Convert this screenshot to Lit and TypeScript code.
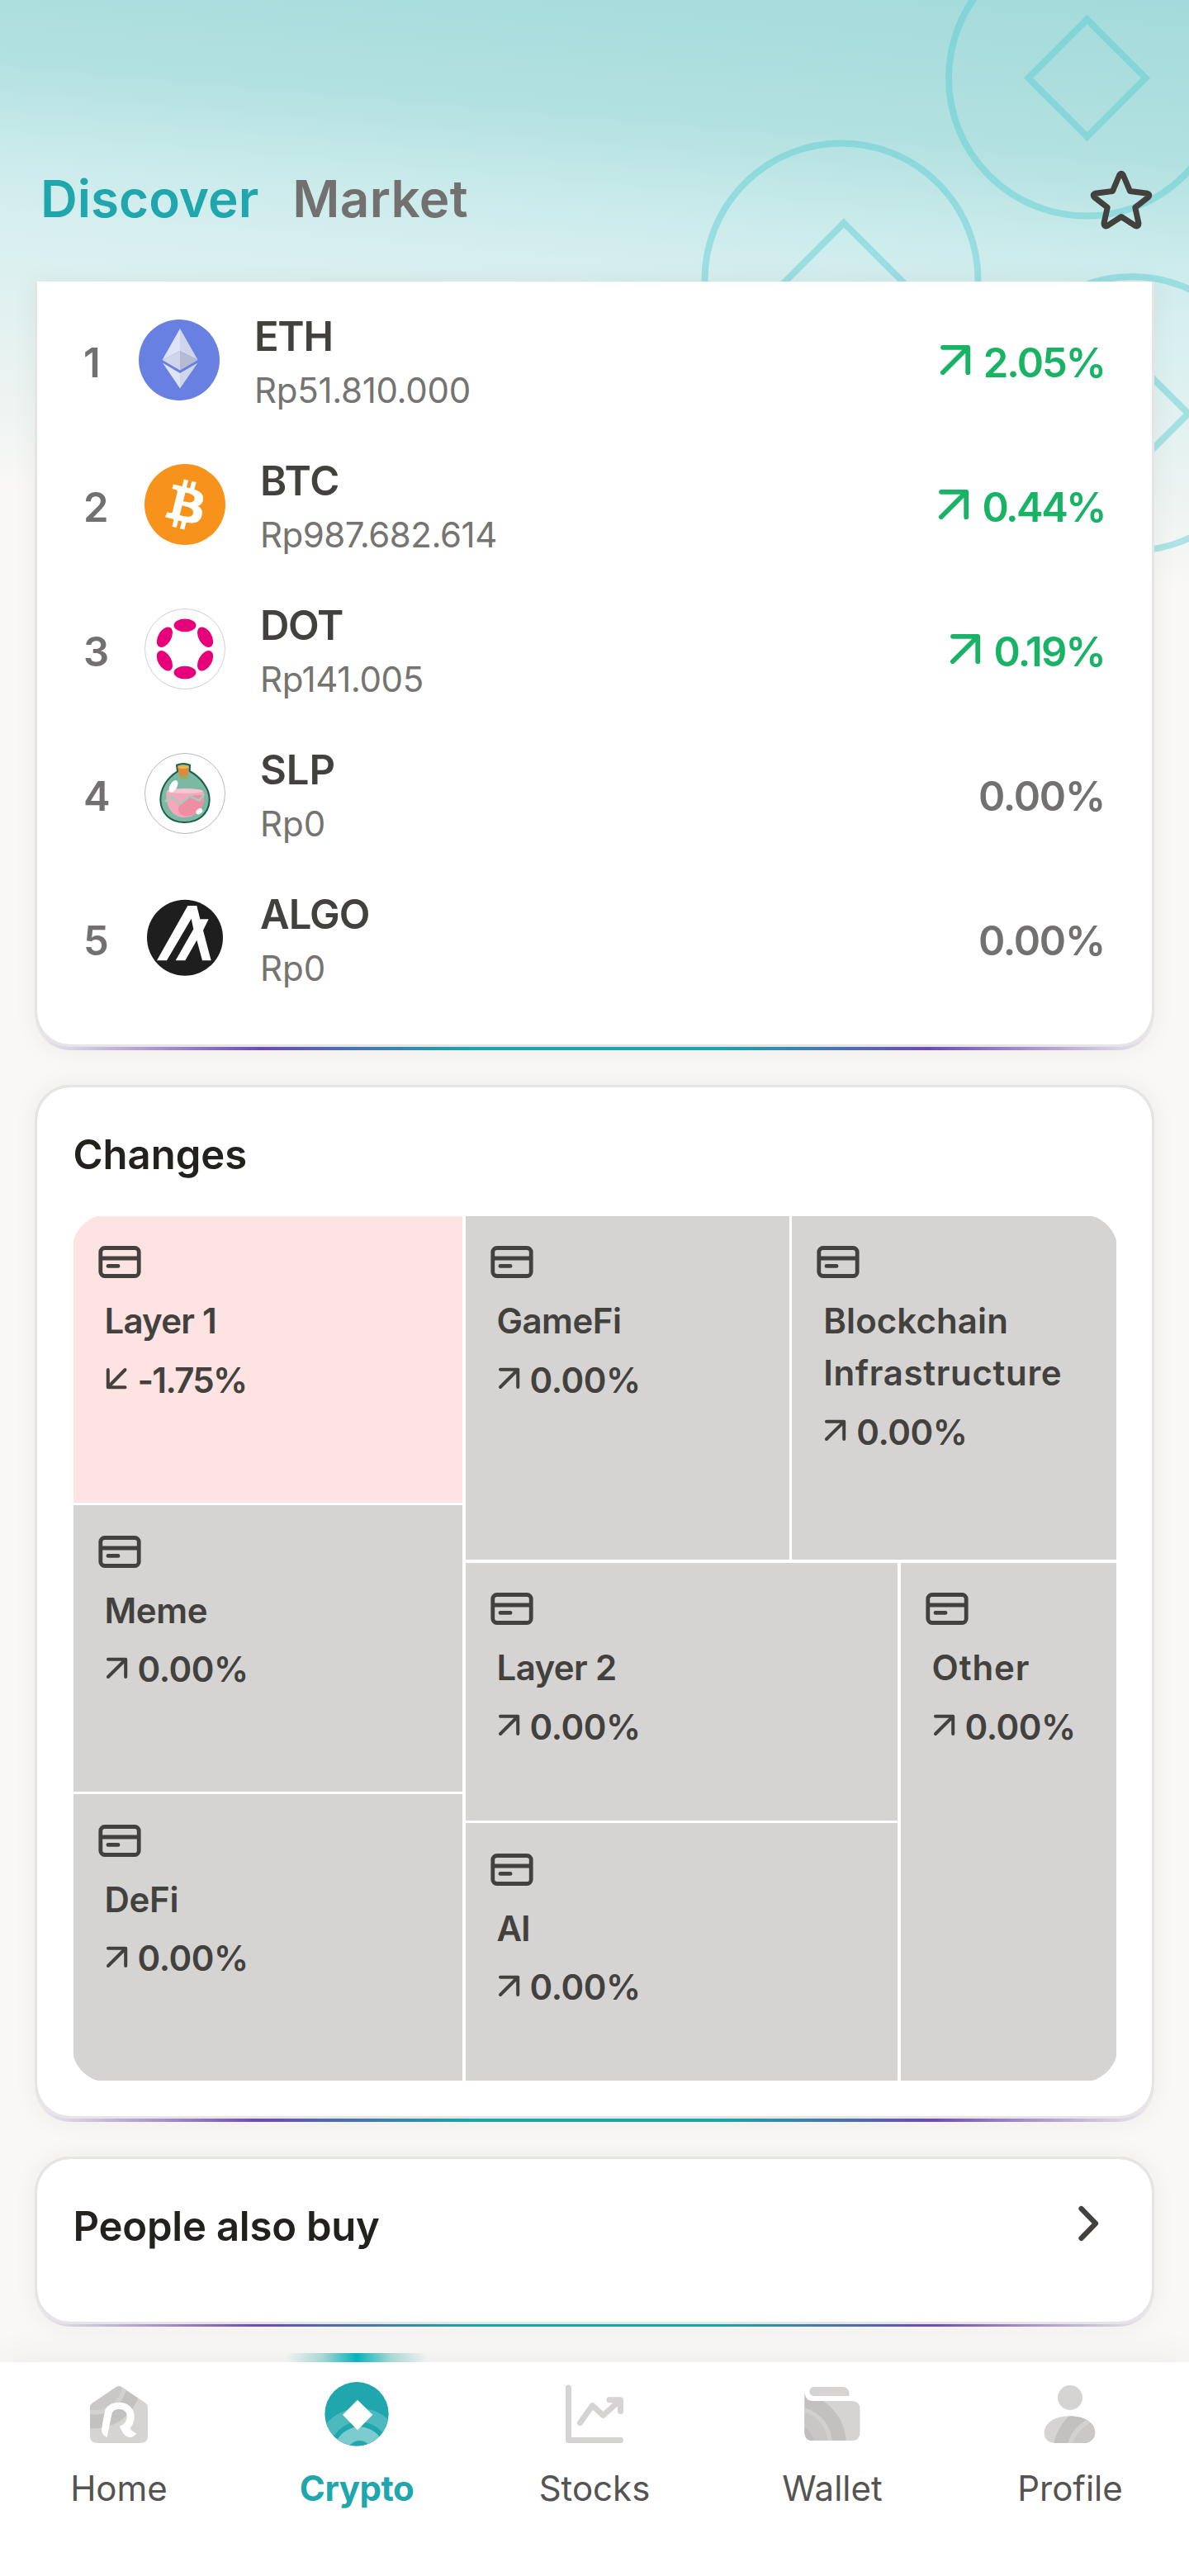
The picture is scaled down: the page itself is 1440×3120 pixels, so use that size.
import { LitElement, html, svg, css, TemplateResult } from "lit";
import { customElement, property } from "lit/decorators.js";
import { classMap } from "lit/directives/class-map.js";
import { styleMap } from "lit/directives/style-map.js";

interface Coin {
  symbol: string;
  price: string;
  change: string;
  up: boolean;
  logo: TemplateResult;
  tight?: boolean;
  symbolTrack: number;
  priceTrack: number;
  changeTrack: number;
}

interface Sector {
  name: { text: string; track: number }[];
  change: string;
  down: boolean;
}

const ethLogo = html`<svg class="logo" viewBox="168 387 98 98">
  <circle cx="217" cy="436" r="49" fill="#6980e3" />
  <path d="M218 398 196.5 436 218 425.3Z" fill="#dfe3f6" />
  <path d="M218 398 239.6 436 218 425.3Z" fill="#cfd5ea" />
  <path d="M196.5 436 218 425.3V448.5Z" fill="#d0d5e9" />
  <path d="M239.6 436 218 425.3V448.5Z" fill="#b5bbd2" />
  <path d="M197 439.5 218 452V470.4Z" fill="#dfe3f6" />
  <path d="M239.4 439.5 218 452V470.4Z" fill="#cfd6ea" />
</svg>`;

const btcLogo = html`<svg class="logo" viewBox="0 0 32 32">
  <circle cx="16" cy="16" r="16" fill="#f7931a" />
  <path fill="#fff" fill-rule="evenodd" d="M23.189 14.02c.314-2.096-1.283-3.223-3.465-3.975l.708-2.84-1.728-.43-.69 2.765c-.454-.114-.92-.22-1.385-.326l.695-2.783L15.596 6l-.708 2.839c-.376-.086-.746-.17-1.104-.26l.002-.009-2.384-.595-.46 1.846s1.283.294 1.256.312c.7.175.826.638.805 1.006l-.806 3.235c.048.012.11.03.18.057l-.183-.045-1.13 4.532c-.086.212-.303.531-.793.41.018.025-1.256-.313-1.256-.313l-.858 1.978 2.25.561c.418.105.828.215 1.231.318l-.715 2.872 1.727.43.708-2.84c.472.127.93.245 1.378.357l-.706 2.828 1.728.43.715-2.866c2.948.558 5.164.333 6.097-2.333.752-2.146-.037-3.385-1.588-4.192 1.13-.26 1.98-1.003 2.207-2.538zm-3.95 5.538c-.533 2.147-4.148.986-5.32.695l.95-3.805c1.172.293 4.929.872 4.37 3.11zm.535-5.569c-.487 1.953-3.495.96-4.47.717l.86-3.45c.975.243 4.118.696 3.61 2.733z" />
</svg>`;

const dotLogo = html`<svg class="logo" viewBox="0 0 98 98">
  <circle cx="49" cy="49" r="48.5" fill="#fff" stroke="#cfcfcf" />
  <g fill="#e6007a">
    <ellipse cx="49" cy="20.4" rx="13.4" ry="7.9" />
    <ellipse cx="49" cy="77.6" rx="13.4" ry="7.9" />
    <ellipse cx="24.4" cy="34.7" rx="13.4" ry="7.9" transform="rotate(-60 24.4 34.7)" />
    <ellipse cx="73.6" cy="34.7" rx="13.4" ry="7.9" transform="rotate(60 73.6 34.7)" />
    <ellipse cx="24.4" cy="63.3" rx="13.4" ry="7.9" transform="rotate(60 24.4 63.3)" />
    <ellipse cx="73.6" cy="63.3" rx="13.4" ry="7.9" transform="rotate(-60 73.6 63.3)" />
  </g>
</svg>`;

const slpLogo = html`<svg class="logo" viewBox="30 36 294 294">
  <circle cx="177" cy="183" r="145.5" fill="#fff" stroke="#adadad" stroke-width="2.6" />
  <path d="M147 80Q171 70 195 80L194 102C232 122 268 165 266 208C263 258 225 288 175 288C125 288 90 256 88 208C88 165 112 126 150 103Z" fill="#7bb9a4" stroke="#1c5e4c" stroke-width="6" stroke-linejoin="round" />
  <path d="M157 114H188L186 131Q172 136 158 130Z" fill="#90b068" />
  <path d="M151 86H191L187 116Q171 121 155 116Z" fill="#e0883d" />
  <ellipse cx="171" cy="87" rx="20" ry="6" fill="#efb53f" />
  <path d="M109 176Q178 188 245 176C254 236 215 270 175 270C135 270 105 236 109 176Z" fill="#f4a8bc" />
  <path d="M180 205Q210 185 243 190C252 235 220 268 178 266C140 256 150 222 180 205Z" fill="#ef8ea3" />
  <ellipse cx="177" cy="174" rx="66" ry="9" fill="#f6c7d3" />
  <path d="M104 213 127 194 160 221 195 193 229 209 247 185" fill="none" stroke="#9fcfbe" stroke-width="7" />
  <ellipse cx="135" cy="157" rx="13" ry="24" fill="#fff" transform="rotate(30 135 157)" />
  <ellipse cx="229" cy="248" rx="13" ry="9" fill="#fff" transform="rotate(-40 229 248)" />
</svg>`;

const algoLogo = html`<svg class="logo" viewBox="30 561 294 294">
  <circle cx="177" cy="707" r="138" fill="#1e1e1e" />
  <path d="M75 790 187 591H220L232 640H263L243 680 272 790H240L220 716 178 790H143L208 676 200 638 111 790Z" fill="#fff" />
</svg>`;

const coins: Coin[] = [
  { symbol: "ETH", price: "Rp51.810.000", change: "2.05%", up: true, logo: ethLogo, tight: true, symbolTrack: -1.3, priceTrack: -0.3, changeTrack: -2 },
  { symbol: "BTC", price: "Rp987.682.614", change: "0.44%", up: true, logo: btcLogo, symbolTrack: 0, priceTrack: -0.5, changeTrack: -2.5 },
  { symbol: "DOT", price: "Rp141.005", change: "0.19%", up: true, logo: dotLogo, symbolTrack: -1.3, priceTrack: -0.4, changeTrack: -1.8 },
  { symbol: "SLP", price: "Rp0", change: "0.00%", up: false, logo: slpLogo, symbolTrack: 0, priceTrack: 0, changeTrack: -1.2 },
  { symbol: "ALGO", price: "Rp0", change: "0.00%", up: false, logo: algoLogo, symbolTrack: -1, priceTrack: 0, changeTrack: -1.2 },
];

const sectors: Record<string, Sector> = {
  layer1: { name: [{ text: "Layer 1", track: -0.8 }], change: "-1.75%", down: true },
  meme: { name: [{ text: "Meme", track: -0.4 }], change: "0.00%", down: false },
  defi: { name: [{ text: "DeFi", track: -0.3 }], change: "0.00%", down: false },
  gamefi: { name: [{ text: "GameFi", track: -0.5 }], change: "0.00%", down: false },
  infra: { name: [{ text: "Blockchain", track: 0.1 }, { text: "Infrastructure", track: 0.65 }], change: "0.00%", down: false },
  layer2: { name: [{ text: "Layer 2", track: -0.6 }], change: "0.00%", down: false },
  ai: { name: [{ text: "AI", track: -1 }], change: "0.00%", down: false },
  other: { name: [{ text: "Other", track: 0.9 }], change: "0.00%", down: false },
};

@customElement("sector-tile")
class SectorTile extends LitElement {
  @property({ attribute: false }) sector!: Sector;

  static styles = css`
    :host { display: block; box-sizing: border-box; min-width: 0; background: #d5d4d2; color: #42413e; padding: 36.5px 0 0 30px; }
    .card-icon { display: block; width: 52px; height: 39px; }
    .name { margin: 20px 0 0 8px; font: 600 42px/63px Inter, sans-serif; white-space: nowrap; }
    .line { display: block; }
    .change { display: flex; align-items: center; margin: 8.5px 0 0 9px; height: 64px; font: 600 42px/64px Inter, sans-serif; letter-spacing: -0.4px; }
    .change.down { letter-spacing: -1.7px; }
    .arrow { width: 27px; height: 27px; margin: -4px 12px 0 0; }
  `;

  render() {
    const s = this.sector;
    return html`
      <svg class="card-icon" viewBox="0 0 52 39" fill="none" stroke="#42413e" stroke-width="4.8">
        <rect x="2.8" y="2.5" width="46.4" height="34" rx="5" />
        <path d="M3 15H49" />
        <path d="M12 24.4H24" stroke-linecap="round" />
      </svg>
      <div class="name">
        ${s.name.map((n) => html`<span class="line" style=${styleMap({ letterSpacing: `${n.track}px` })}>${n.text}</span>`)}
      </div>
      <div class=${classMap({ change: true, down: s.down })}>
        <svg class="arrow" viewBox="0 0 27 27" fill="none" stroke="#42413e" stroke-width="4" stroke-linecap="round" stroke-linejoin="round">
          ${s.down ? svg`<path d="M2.8 3V24.2H23.5M3 24 23.5 3" />` : svg`<path d="M3 2.8H24.2V24M24 3 3 24" />`}
        </svg>
        <span>${s.change}</span>
      </div>`;
  }
}

const grey = "#d5d4d2";

const tabs = [
  {
    label: "Home",
    icon: html`<svg class="tab-icon" viewBox="0 0 288 288">
      <clipPath id="house"><path d="M39 137Q39 129 47 123L132 65Q144 57 156 65L240 121Q249 128 249 137V240Q249 267 222 267H66Q39 267 39 240Z" /></clipPath>
      <g clip-path="url(#house)">
        <rect width="288" height="288" fill=${grey} />
        <circle cx="55" cy="45" r="169" fill="#c2c1bf" />
        <circle cx="55" cy="45" r="119" fill="#d3d2d0" />
        <circle cx="55" cy="45" r="103" fill="#c9c8c6" />
      </g>
      <path fill="#fff" d="M101 246C84 240 79 225 82 210L92 155C96 130 120 119 145 119C180 119 203 145 200 175C199 192 193 205 184 214C190 222 198 228 208 232C200 242 192 247 182 246C162 243 155 225 146 205C165 200 174 185 173 167C172 152 160 144 145 144C128 144 119 152 117 168Z" />
    </svg>`,
  },
  {
    label: "Crypto",
    active: true,
    icon: html`<svg class="tab-icon" viewBox="864 0 288 288">
      <clipPath id="coin"><circle cx="1008" cy="161" r="116" /></clipPath>
      <g clip-path="url(#coin)">
        <rect x="864" width="288" height="288" fill="#1fa7ad" />
        <circle cx="1018" cy="300" r="159" fill="#4cb9be" />
        <circle cx="1018" cy="300" r="110" fill="#1fa7ad" />
        <circle cx="1018" cy="300" r="92" fill="#7ccbcf" />
        <circle cx="1018" cy="300" r="42" fill="#1fa7ad" />
      </g>
      <path d="M1011 110 1066 164 1011 220 957 164Z" fill="#fff" />
    </svg>`,
  },
  {
    label: "Stocks",
    icon: html`<svg class="tab-icon" viewBox="672 2870 96 96" fill="none" stroke=${grey} stroke-width="7" stroke-linecap="round" stroke-linejoin="round">
      <path d="M688.5 2892V2955.5H751.5" />
      <path d="M702.5 2934.5 717.5 2913.5 730.5 2925.5 750 2908M738 2906.8H751.5V2920.5" />
    </svg>`,
  },
  {
    label: "Wallet",
    icon: html`<svg class="tab-icon" viewBox="960 2870 96 96">
      <clipPath id="purse"><path d="M974.5 2899Q976 2908 984 2908H1031.5Q1041.5 2908 1041.5 2918V2946Q1041.5 2956 1031.5 2956H984.5Q974.5 2956 974.5 2946Z" /></clipPath>
      <path d="M986 2891H1020Q1028.5 2891 1028.5 2899.5V2902H985.5A5.5 5.5 0 0 1 986 2891Z" fill=${grey} />
      <g clip-path="url(#purse)">
        <rect x="960" y="2870" width="96" height="96" fill=${grey} />
        <circle cx="963" cy="2960" r="62" fill="#c2c1bf" />
        <circle cx="963" cy="2960" r="45" fill="#d1d0ce" />
        <circle cx="963" cy="2960" r="40" fill="#c8c7c5" />
        <circle cx="963" cy="2960" r="23" fill="#bfbebc" />
      </g>
    </svg>`,
  },
  {
    label: "Profile",
    icon: html`<svg class="tab-icon" viewBox="1248 2870 96 96">
      <clipPath id="bust"><path d="M1278 2959C1265 2959 1261 2946 1268 2937C1277 2922.5 1314 2922.5 1323 2937C1330 2946 1325 2959 1313 2959Z" /></clipPath>
      <circle cx="1296" cy="2904" r="15" fill=${grey} />
      <g clip-path="url(#bust)">
        <rect x="1248" y="2870" width="96" height="96" fill=${grey} />
        <circle cx="1338" cy="2972" r="63" fill="#c2c1bf" />
        <circle cx="1338" cy="2972" r="46.5" fill="#d3d2d0" />
        <circle cx="1338" cy="2972" r="41" fill="#c9c8c6" />
      </g>
    </svg>`,
  },
];

@customElement("app-root")
class AppRoot extends LitElement {
  static styles = css`
    :host { display: block; width: 1440px; height: 3120px; font-family: Inter, sans-serif; }
    .page { position: relative; isolation: isolate; display: flex; flex-direction: column; width: 1440px; height: 3120px; background: #f9f8f6; overflow: hidden; }
    .backdrop { position: absolute; top: 0; left: 0; width: 1440px; height: 760px; z-index: -2;
      background: linear-gradient(185deg, #a4dadb 0, #b3e1e1 200px, #cbebeb 310px, #d8eff0 400px, #dff1f0 480px, #ebf3f1 590px, #f9f8f6 710px); }
    .header { display: flex; align-items: flex-start; box-sizing: border-box; height: 341px; padding: 203px 42px 0 49px; }
    .tab-title { font-size: 62px; line-height: 76px; font-weight: 600; letter-spacing: 0.3px; color: #73716f; }
    .tab-title.on { color: #1fa7ad; letter-spacing: 0; margin-right: 41px; }
    .star { width: 80px; height: 80px; margin-left: auto; margin-top: -1px; }
    .main { display: flex; flex-direction: column; gap: 45.7px; padding: 0 42px; }
    .card { position: relative; box-sizing: border-box; background: #fff; border: 3.5px solid #e5e5e5; border-radius: 43px; background-clip: padding-box; }
    .card::before { content: ""; position: absolute; z-index: -1; inset: -3px -3px -6.5px; border-radius: 43px;
      background: linear-gradient(90deg, rgba(110, 75, 176, .08), #6e4bb0 20%, #1aa5ab 39%, #1aa5ab 61%, #6e4bb0 80%, rgba(110, 75, 176, .08)); box-shadow: 0 0 30px rgba(60, 50, 40, .06); }
    .card::after { content: ""; position: absolute; z-index: -1; inset: -3px; border-radius: 43px; background: #e5e5e5; }
    .coins { height: 927.3px; border-top: 0; border-radius: 0 0 43px 43px; padding: 11.5px 57px 0 58px; }
    .coins::before, .coins::after { top: 0; border-radius: 0 0 43px 43px; }
    .row { display: flex; align-items: center; height: 175px; }
    .rank { width: 75px; margin-left: -2px; font-size: 49px; line-height: 64px; font-weight: 600; color: #73716f; }
    .rank.tight { width: 68px; }
    .logo { width: 98px; height: 98px; flex: none; margin: 0 42px 8px -1px; }
    .symbol { font-size: 49px; line-height: 65.5px; font-weight: 600; color: #42413e; }
    .price { font-size: 42px; line-height: 65.5px; color: #757471; }
    .delta { display: flex; align-items: center; margin-left: auto; font-size: 49px; line-height: 64px; font-weight: 600; color: #73716f; }
    .delta.up { color: #19b365; }
    .delta-arrow { width: 38px; height: 38px; margin: -9px 15px 0 0; }
    .changes { height: 1252.3px; padding: 50.5px 43.5px 0; }
    .title { font-size: 49px; line-height: 64px; font-weight: 600; color: #22211e; }
    .treemap { display: flex; gap: 3.5px; height: 1047px; margin: 39.5px -2px 0; padding: 2px; border-radius: 44px; overflow: hidden; }
    .left { display: flex; flex-direction: column; gap: 3.5px; width: 471.5px; flex: none; }
    .grow { flex: 1; }
    .right { flex: 1; display: flex; flex-direction: column; gap: 3.5px; min-width: 0; }
    .top { display: flex; gap: 3.5px; height: 416.5px; }
    .bottom { display: flex; gap: 3.5px; flex: 1; }
    .stack { display: flex; flex-direction: column; gap: 3.5px; width: 523.5px; flex: none; }
    .pink { background: #fee3e3; }
    .people { display: flex; align-items: flex-start; justify-content: space-between; height: 203px; padding: 50px 62px 0 43.5px; }
    .people .title { letter-spacing: -0.2px; }
    .chevron { width: 30px; height: 48px; margin-top: 4px; }
    .nav { position: relative; display: flex; height: 259px; margin-top: auto; background: #fff; box-shadow: 0 0 44px rgba(60, 50, 40, .07); }
    .nav::before { content: ""; position: absolute; left: 346px; top: -11px; width: 172px; height: 11px;
      background: linear-gradient(90deg, rgba(26, 165, 160, 0), rgba(26, 165, 160, .35) 26%, #06b3b9 50%, rgba(26, 165, 160, .35) 74%, rgba(26, 165, 160, 0)); }
    .tab { display: flex; flex-direction: column; align-items: center; width: 288px; padding-top: 9px; }
    .tab-icon { width: 96px; height: 96px; }
    .tab-label { margin-top: 23px; font-size: 42px; line-height: 50px; font-weight: 400; color: #555452; }
    .tab-label.on { font-weight: 700; letter-spacing: -0.5px; color: #1fa7ad; }
  `;

  private row(c: Coin, i: number) {
    return html`<div class="row">
      <span class=${classMap({ rank: true, tight: !!c.tight })}>${i + 1}</span>
      ${c.logo}
      <div>
        <div class="symbol" style=${styleMap({ letterSpacing: `${c.symbolTrack}px` })}>${c.symbol}</div>
        <div class="price" style=${styleMap({ letterSpacing: `${c.priceTrack}px` })}>${c.price}</div>
      </div>
      <div class=${classMap({ delta: true, up: c.up })}>
        ${c.up
          ? html`<svg class="delta-arrow" viewBox="0 0 38 38" fill="none" stroke="#19b365" stroke-width="5.8" stroke-linecap="round" stroke-linejoin="round"><path d="M4 3.8H34.2V34.2M33.5 4.5 3.8 34.2" /></svg>`
          : null}
        <span style=${styleMap({ letterSpacing: `${c.changeTrack}px` })}>${c.change}</span>
      </div>
    </div>`;
  }

  render() {
    return html`<div class="page">
      <div class="backdrop">
        <svg width="1440" height="760" viewBox="0 0 1440 760" fill="none" stroke="#4fcbd1" stroke-width="8" opacity=".42">
          <circle cx="1316" cy="94.5" r="167" />
          <path d="M1316.5 23.5 1387.5 94.5 1316.5 165.5 1245.5 94.5Z" />
          <circle cx="1019" cy="339" r="165.5" />
          <path d="M1022 270 1093 341 1022 412 951 341Z" />
          <circle cx="1371" cy="501" r="166" />
          <path d="M1368 430 1439 501 1368 572 1297 501Z" />
        </svg>
      </div>
      <div class="header">
        <span class="tab-title on">Discover</span>
        <span class="tab-title">Market</span>
        <svg class="star" viewBox="1317 202 80 80" fill="none" stroke="#42413e" stroke-width="7" stroke-linejoin="round">
          <path d="M1354.5 212.5Q1357 208 1359.500 212.500L1367.500 231.500 1388.500 234.300Q1392.500 235.500 1389.500 239L1373.800 251.300 1378 270.500Q1378 275 1374 273.500L1357 262.500 1340 273.500Q1336 275 1336 270.500L1340.200 251.300 1324.500 239Q1321.500 235.500 1325.500 234.300L1346.500 231.500Z" />
        </svg>
      </div>
      <div class="main">
        <div class="card coins">${coins.map((c, i) => this.row(c, i))}</div>
        <div class="card changes">
          <div class="title">Changes</div>
          <div class="treemap">
            <div class="left">
              <sector-tile class="grow pink" .sector=${sectors.layer1}></sector-tile>
              <sector-tile class="grow" .sector=${sectors.meme}></sector-tile>
              <sector-tile class="grow" .sector=${sectors.defi}></sector-tile>
            </div>
            <div class="right">
              <div class="top">
                <sector-tile class="grow" .sector=${sectors.gamefi}></sector-tile>
                <sector-tile class="grow" .sector=${sectors.infra}></sector-tile>
              </div>
              <div class="bottom">
                <div class="stack">
                  <sector-tile class="grow" .sector=${sectors.layer2}></sector-tile>
                  <sector-tile class="grow" .sector=${sectors.ai}></sector-tile>
                </div>
                <sector-tile class="grow" .sector=${sectors.other}></sector-tile>
              </div>
            </div>
          </div>
        </div>
        <div class="card people">
          <div class="title">People also buy</div>
          <svg class="chevron" viewBox="0 0 30 48" fill="none" stroke="#42413e" stroke-width="6.2" stroke-linecap="round" stroke-linejoin="round"><path d="M6.5 6 24 24 6.5 42" /></svg>
        </div>
      </div>
      <div class="nav">
        ${tabs.map((t) => html`<div class="tab">${t.icon}<span class=${classMap({ "tab-label": true, on: !!t.active })}>${t.label}</span></div>`)}
      </div>
    </div>`;
  }
}
